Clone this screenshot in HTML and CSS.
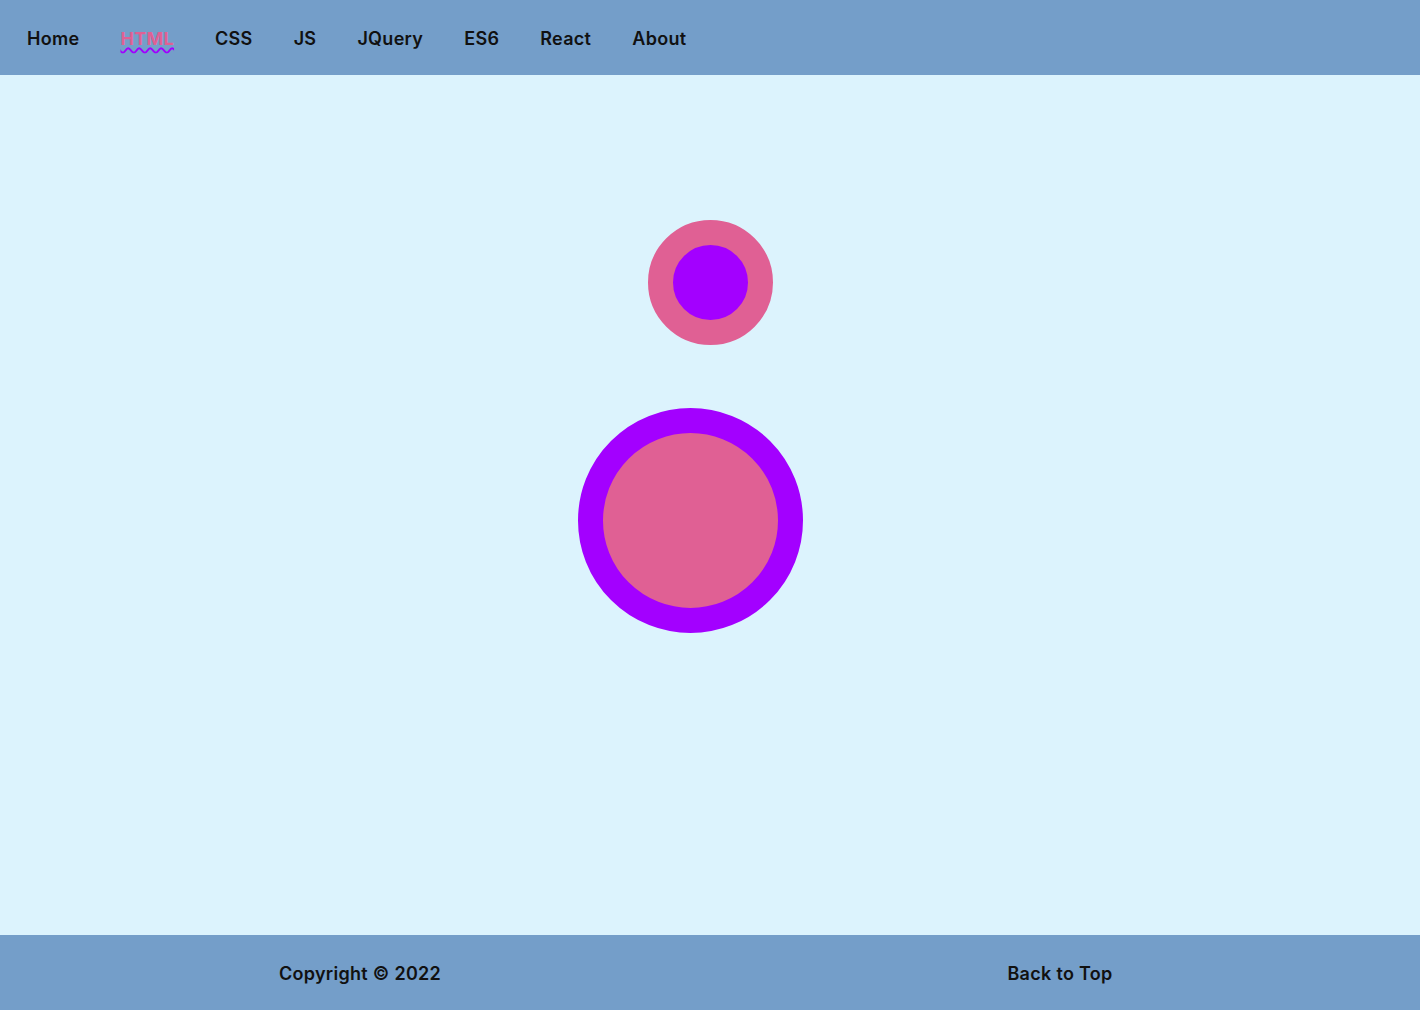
FILE: index.html
```html
<!DOCTYPE html>
<html lang="en">
<head>
<meta charset="utf-8">
<title>Circles</title>
<link rel="stylesheet" href="styles.css">
</head>
<body>
<header class="topbar">
  <nav class="nav">
    <a class="nav-link" href="#">Home</a>
    <a class="nav-link active" href="#">HTML</a>
    <a class="nav-link" href="#">CSS</a>
    <a class="nav-link" href="#">JS</a>
    <a class="nav-link" href="#">JQuery</a>
    <a class="nav-link" href="#">ES6</a>
    <a class="nav-link" href="#">React</a>
    <a class="nav-link" href="#">About</a>
  </nav>
</header>
<main class="stage">
  <div class="ring ring-small"></div>
  <div class="ring ring-big"></div>
</main>
<footer class="footer">
  <span class="foot-item">Copyright © 2022</span>
  <a class="foot-item" href="#">Back to Top</a>
</footer>
</body>
</html>
```
FILE: styles.css
```css
* { box-sizing: border-box; }
html, body { margin: 0; padding: 0; }
body {
  font-family: Inter, "Noto Sans", sans-serif;
  font-weight: 600;
  font-size: 18px;
  letter-spacing: 0.3px;
  color: #111;
  background: #dcf3fd;
  height: 1010px;
  display: flex;
  flex-direction: column;
}
a { color: inherit; text-decoration: none; }
.topbar {
  height: 75px;
  background: #749ec9;
  display: flex;
  align-items: center;
  padding: 1px 0 0 27px;
}
.nav { display: flex; gap: 41px; }
.nav-link.active {
  color: #e06094;
  font-weight: 700;
  text-decoration: underline wavy #a000ff;
  text-decoration-thickness: 1.5px;
  text-underline-offset: 2px;
}
.stage {
  flex: 1;
  display: flex;
  flex-direction: column;
  align-items: center;
  padding-top: 145px;
}
.ring { border-radius: 50%; border-style: solid; border-width: 25px; }
.ring-small {
  width: 125px; height: 125px;
  background: #a300ff;
  border-color: #e06094;
}
.ring-big {
  width: 225px; height: 225px;
  margin-top: 63px;
  margin-left: -40px;
  background: #e06094;
  border-color: #a300ff;
}
.footer {
  height: 75px;
  background: #749ec9;
  display: grid;
  grid-template-columns: 1fr 1fr;
  align-items: center;
  padding: 1px 10px 0;
  text-align: center;
}
```
